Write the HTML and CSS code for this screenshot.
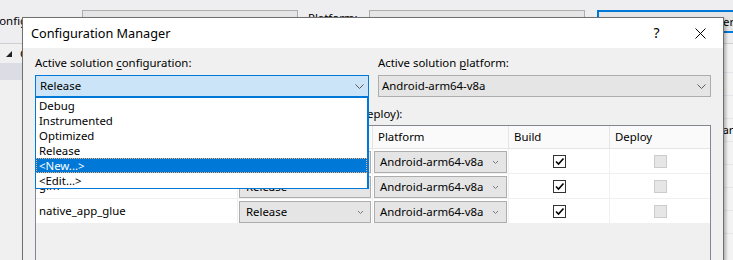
FILE: index.html
```html
<!DOCTYPE html>
<html>
<head>
<meta charset="utf-8">
<link rel="stylesheet" href="styles.css">
</head>
<body>
<div class="ide">
  <div class="toolbar">
    <span class="tb-label tb-cfg">Configuration:</span>
    <div class="tb-combo">Active(Release)</div>
    <span class="tb-label tb-plat">Platform:</span>
    <div class="tb-combo">Active(Android-arm64-v8a)</div>
    <div class="tb-button">Configuration Manager...</div>
  </div>
  <div class="ide-body">
    <div class="tree">
      <div class="tree-row"><svg class="tri" width="6" height="6" viewBox="0 0 6 6"><path d="M6 0 L6 6 L0 6 Z" fill="#222"/></svg>Configuration Properties</div>
      <div class="tree-row sel">General</div>
    </div>
    <div class="props">
      <div class="prow"></div>
      <div class="prow"></div>
      <div class="prow"></div>
      <div class="prow txt">Target Platform</div>
      <div class="prow"></div>
      <div class="prow"></div>
      <div class="prow"></div>
      <div class="prow"></div>
    </div>
  </div>
</div>

<div class="dialog">
  <div class="titlebar">
    <span class="title">Configuration Manager</span>
    <span class="tbtn help">?</span>
    <span class="tbtn close">
      <svg width="11" height="11" viewBox="0 0 11 11"><path d="M0.5 0.5 L10.5 10.5 M10.5 0.5 L0.5 10.5" stroke="#000" stroke-width="1" fill="none"/></svg>
    </span>
  </div>
  <div class="content">
    <div class="fields">
      <div class="field">
        <div class="field-label">Active solution <u>c</u>onfiguration:</div>
        <div class="combo-wrap">
          <div class="combo active">
            <span>Release</span>
            <svg class="chev" width="9" height="5" viewBox="0 0 9 5"><path d="M0.5 0.5 L4.5 4.5 L8.5 0.5" stroke="#5a5a5a" stroke-width="1" fill="none"/></svg>
          </div>
          <ul class="dropdown">
            <li>Debug</li>
            <li>Instrumented</li>
            <li>Optimized</li>
            <li>Release</li>
            <li class="selected">&lt;New...&gt;</li>
            <li>&lt;Edit...&gt;</li>
          </ul>
        </div>
      </div>
      <div class="field">
        <div class="field-label">Active solution <u>p</u>latform:</div>
        <div class="combo">
          <span>Android-arm64-v8a</span>
          <svg class="chev" width="9" height="5" viewBox="0 0 9 5"><path d="M0.5 0.5 L4.5 4.5 L8.5 0.5" stroke="#5a5a5a" stroke-width="1" fill="none"/></svg>
        </div>
      </div>
    </div>
    <div class="proj-label">Project contexts (check the project configurations to build or deploy):</div>
    <div class="grid">
      <div class="grow hdr">
        <div class="cell">Project</div>
        <div class="cell">Configuration</div>
        <div class="cell">Platform</div>
        <div class="cell">Build</div>
        <div class="cell">Deploy</div>
      </div>
      <div class="grow">
        <div class="cell name">Teapot</div>
        <div class="cell"><div class="rcombo cfg"><span>Release</span><svg width="5" height="3" viewBox="0 0 5 3"><path d="M0 0 L2.5 2.5 L5 0" stroke="#7a7a7a" fill="none"/></svg></div></div>
        <div class="cell"><div class="rcombo plat"><span>Android-arm64-v8a</span><svg width="5" height="3" viewBox="0 0 5 3"><path d="M0 0 L2.5 2.5 L5 0" stroke="#7a7a7a" fill="none"/></svg></div></div>
        <div class="cell ck"><span class="cb on"><svg width="11" height="11" viewBox="0 0 11 11"><path d="M2 5.5 L4.5 8 L9.5 2.5" stroke="#000" stroke-width="1.6" fill="none"/></svg></span></div>
        <div class="cell ck"><span class="cb off"></span></div>
      </div>
      <div class="grow">
        <div class="cell name">glm</div>
        <div class="cell"><div class="rcombo cfg"><span>Release</span><svg width="5" height="3" viewBox="0 0 5 3"><path d="M0 0 L2.5 2.5 L5 0" stroke="#7a7a7a" fill="none"/></svg></div></div>
        <div class="cell"><div class="rcombo plat"><span>Android-arm64-v8a</span><svg width="5" height="3" viewBox="0 0 5 3"><path d="M0 0 L2.5 2.5 L5 0" stroke="#7a7a7a" fill="none"/></svg></div></div>
        <div class="cell ck"><span class="cb on"><svg width="11" height="11" viewBox="0 0 11 11"><path d="M2 5.5 L4.5 8 L9.5 2.5" stroke="#000" stroke-width="1.6" fill="none"/></svg></span></div>
        <div class="cell ck"><span class="cb off"></span></div>
      </div>
      <div class="grow">
        <div class="cell name">native_app_glue</div>
        <div class="cell"><div class="rcombo cfg"><span>Release</span><svg width="5" height="3" viewBox="0 0 5 3"><path d="M0 0 L2.5 2.5 L5 0" stroke="#7a7a7a" fill="none"/></svg></div></div>
        <div class="cell"><div class="rcombo plat"><span>Android-arm64-v8a</span><svg width="5" height="3" viewBox="0 0 5 3"><path d="M0 0 L2.5 2.5 L5 0" stroke="#7a7a7a" fill="none"/></svg></div></div>
        <div class="cell ck"><span class="cb on"><svg width="11" height="11" viewBox="0 0 11 11"><path d="M2 5.5 L4.5 8 L9.5 2.5" stroke="#000" stroke-width="1.6" fill="none"/></svg></span></div>
        <div class="cell ck"><span class="cb off"></span></div>
      </div>
    </div>
  </div>
</div>
</body>
</html>
```
FILE: styles.css
```css
* { box-sizing: border-box; margin: 0; padding: 0; }
body {
  width: 733px; height: 260px; overflow: hidden; position: relative;
  background: #f0f0f0; color: #000;
  font: 11.4px/16px "Noto Sans", "Segoe UI", sans-serif;
}
u { text-decoration: underline; text-underline-offset: 2px; }

/* background IDE window */
.ide { height: 260px; display: flex; flex-direction: column; position: relative; z-index: 0; }
.toolbar {
  height: 44px; display: flex; align-items: flex-start; padding-top: 10px;
  border-bottom: 1px solid #cfcfcf; background: #eeeef0; white-space: nowrap;
}
.tb-label { line-height: 22px; flex: none; }
.tb-cfg { width: 90px; margin-left: -8px; }
.tb-plat { width: 71px; padding-left: 10px; line-height: 16px; }
.tb-combo {
  flex: none; width: 216px; height: 22px; border: 1px solid #adadad; background: #e5e5e5;
  padding-left: 4px; line-height: 20px; color: #6d6d6d; overflow: hidden;
}
.tb-button {
  flex: none; margin-left: 12px; width: 150px; height: 23px; border: 2px solid #0078d7;
  background: #e5e5e5; padding-left: 10px; line-height: 19px;
}
.ide-body { flex: 1; display: flex; }
.tree { flex: 1; padding-top: 1px; white-space: nowrap; }
.tree-row { height: 18px; line-height: 18px; padding-left: 20px; display: flex; align-items: center; }
.tree-row .tri { margin-left: -14px; margin-right: 8px; }
.tree-row.sel { height: 17px; background: #dcdce4; padding-left: 40px; }
.props { width: 17px; flex: none; padding-top: 6px; background: #f3f3f3; }
.prow { height: 23px; border-bottom: 1px solid #e4e4ea; white-space: nowrap; line-height: 22px; padding-left: 1px; }

/* dialog window */
.dialog {
  position: absolute; left: 22px; top: 17px; width: 702px; height: 243px; z-index: 5;
  border: 1px solid #707070; border-bottom: 0; background: #f0f0f0; overflow: hidden;
  box-shadow: 2px 2px 3px rgba(0,0,0,0.28);
}
.titlebar { height: 30px; background: #fff; display: flex; align-items: center; }
.title { flex: 1; padding-left: 8px; font-size: 12.7px; }
.tbtn { width: 46px; height: 30px; display: flex; align-items: center; justify-content: center; }
.help { font-size: 14px; padding-left: 5px; }
.close { padding-top: 1px; }

.content { padding: 7px 12px 0; }
.fields { display: grid; grid-template-columns: 334px 333px; column-gap: 9px; }
.field-label { line-height: 16px; margin-bottom: 4px; white-space: nowrap; }
.combo-wrap { position: relative; }
.combo {
  height: 22px; border: 1px solid #adadad; background: #e5e5e5;
  display: flex; align-items: center; justify-content: space-between; padding: 0 4px 0 3px;
}
.combo.active { background: #cce4f7; border-color: #0078d7; padding-left: 4px; }
.chev { margin-top: 1px; }

.dropdown {
  position: absolute; top: 100%; left: 0; width: 334px; list-style: none;
  background: #fff; border: 1px solid #0078d7; border-right-width: 2px; z-index: 2;
}
.dropdown li { height: 15px; line-height: 15px; padding-left: 3px; }
.dropdown li.selected { background: #0078d7; color: #fff; outline: 1px dotted #f3b070; outline-offset: -1px; }

.proj-label { margin-top: 9px; margin-bottom: 3px; line-height: 16px; white-space: nowrap; }
.grid { border: 1px solid #828790; height: 140px; background: #f0f0f0; }
.grow { display: grid; grid-template-columns: 202px 135px 136px 101px 100px; height: 25px; background: #fff; }
.grow .cell { border-right: 1px solid #f0f0f0; border-bottom: 1px solid #f0f0f0; white-space: nowrap; }
.grow .cell:last-child { border-right: 0; }
.grow.hdr { height: 23px; background: #fafafa; }
.grow.hdr .cell { border-color: #e5e5e5; line-height: 22px; padding-left: 5px; }
.cell.name { line-height: 24px; padding-left: 3px; }
.rcombo {
  margin: 2px 0 0 1px; height: 22px; border: 1px solid #adadad; background: #e5e5e5;
  display: flex; align-items: center; justify-content: space-between;
}
.rcombo.cfg { width: 132px; padding: 0 7px 0 6px; }
.rcombo.plat { width: 133px; padding: 0 8px 0 5px; }
.cell.ck { display: flex; align-items: center; justify-content: center; }
.cb { width: 13px; height: 13px; display: flex; align-items: center; justify-content: center; }
.cb.on { border: 1px solid #333; background: #fff; }
.cb.off { border: 1px solid #cccccc; background: #e6e6e6; }
```
